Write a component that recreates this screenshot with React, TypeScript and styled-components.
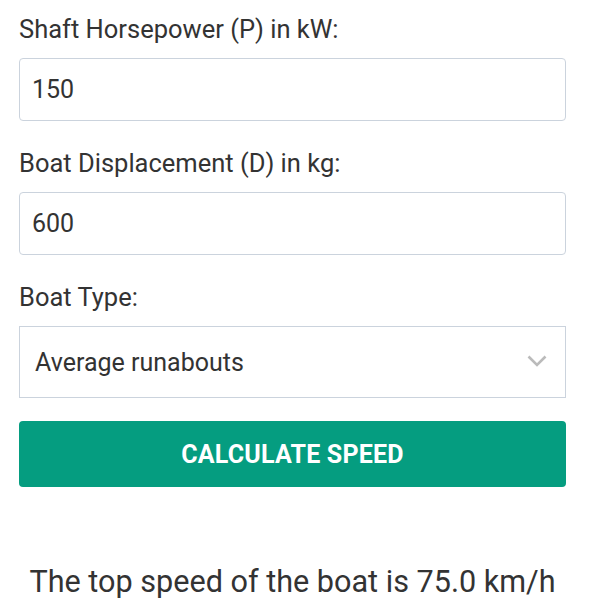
import React, { useState } from "react";
import styled, { createGlobalStyle } from "styled-components";

const GlobalStyle = createGlobalStyle`
  body {
    margin: 0;
    background: #ffffff;
    font-family: Roboto, "Liberation Sans", sans-serif;
    color: #333333;
  }
`;

const Page = styled.div`
  width: 547px;
  padding: 14px 0 0 19px;
  display: flex;
  flex-direction: column;
`;

const Field = styled.div<{ $last?: boolean }>`
  display: flex;
  flex-direction: column;
  gap: 14px;
  margin-bottom: ${(p) => (p.$last ? "0" : "27px")};
`;

const Label = styled.label`
  font-size: 25.5px;
  line-height: 30px;
  color: #333333;
`;

const TextInput = styled.input`
  box-sizing: border-box;
  width: 100%;
  height: 63px;
  padding: 0 12px;
  border: 1px solid #cbd3dd;
  border-radius: 4px;
  font-family: inherit;
  font-size: 25px;
  color: #333333;
  outline: none;
`;

const SelectWrap = styled.div`
  position: relative;
`;

const Select = styled.select`
  box-sizing: border-box;
  width: 100%;
  height: 72px;
  padding: 0 15px;
  border: 1px solid #cbd3dd;
  border-radius: 0;
  background: #ffffff;
  appearance: none;
  font-family: inherit;
  font-size: 25px;
  color: #333333;
  outline: none;
`;

const Chevron = styled.svg`
  position: absolute;
  right: 19px;
  top: 29px;
  pointer-events: none;
`;

const Button = styled.button`
  box-sizing: border-box;
  width: 100%;
  height: 66px;
  margin-top: 23px;
  border: none;
  border-radius: 4px;
  background: #059d80;
  color: #ffffff;
  font-family: inherit;
  font-size: 25px;
  font-weight: 700;
  letter-spacing: 0.2px;
  text-transform: uppercase;
  cursor: pointer;
`;

const Result = styled.p`
  margin: 77px 0 0;
  text-align: center;
  font-size: 30.6px;
  line-height: 36px;
  color: #333333;
`;

const boatTypes = ["Average runabouts", "Cruisers", "Race boats", "Sailboats"];

export default function App() {
  const [power, setPower] = useState("150");
  const [weight, setWeight] = useState("600");
  const [type, setType] = useState(boatTypes[0]);

  return (
    <>
      <GlobalStyle />
      <Page>
        <Field>
          <Label>Shaft Horsepower (P) in kW:</Label>
          <TextInput value={power} onChange={(e) => setPower(e.target.value)} />
        </Field>
        <Field>
          <Label>Boat Displacement (D) in kg:</Label>
          <TextInput value={weight} onChange={(e) => setWeight(e.target.value)} />
        </Field>
        <Field $last>
          <Label>Boat Type:</Label>
          <SelectWrap>
            <Select value={type} onChange={(e) => setType(e.target.value)}>
              {boatTypes.map((t) => (
                <option key={t}>{t}</option>
              ))}
            </Select>
            <Chevron width="20" height="12" viewBox="0 0 20 12">
              <path d="M1.5 1.5 L10 10 L18.5 1.5" fill="none" stroke="#bbbbbb" strokeWidth="2.6" />
            </Chevron>
          </SelectWrap>
        </Field>
        <Button>Calculate Speed</Button>
        <Result>The top speed of the boat is 75.0 km/h</Result>
      </Page>
    </>
  );
}
